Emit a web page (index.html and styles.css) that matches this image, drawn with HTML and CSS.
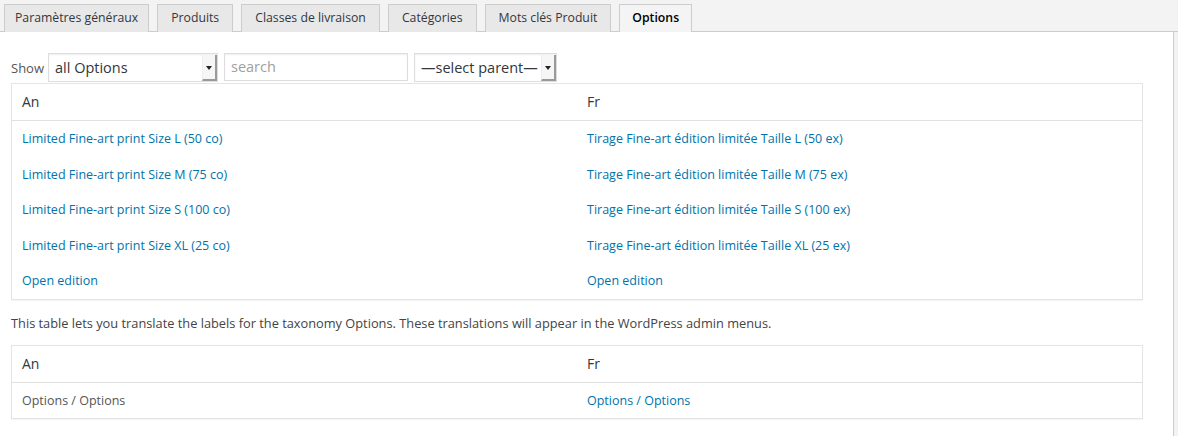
FILE: index.html
```html
<!DOCTYPE html>
<html>
<head>
<meta charset="utf-8">
<link rel="stylesheet" href="styles.css">
</head>
<body>
<nav class="tabs">
  <a class="tab tab-first">Paramètres généraux</a>
  <a class="tab">Produits</a>
  <a class="tab">Classes de livraison</a>
  <a class="tab">Catégories</a>
  <a class="tab">Mots clés Produit</a>
  <a class="tab tab-active">Options</a>
</nav>
<div class="panel">
  <div class="filters">
    <span class="show-label">Show</span>
    <div class="fake-select sel-all"><span class="sel-text">all Options</span><span class="sel-arrow"></span></div>
    <div class="search-box">search</div>
    <div class="fake-select sel-parent"><span class="sel-text">—select parent—</span><span class="sel-arrow"></span></div>
  </div>
  <table class="grid">
    <thead>
      <tr><th>An</th><th>Fr</th></tr>
    </thead>
    <tbody>
      <tr><td><a>Limited Fine-art print Size L (50 co)</a></td><td><a>Tirage Fine-art édition limitée Taille L (50 ex)</a></td></tr>
      <tr><td><a>Limited Fine-art print Size M (75 co)</a></td><td><a>Tirage Fine-art édition limitée Taille M (75 ex)</a></td></tr>
      <tr><td><a>Limited Fine-art print Size S (100 co)</a></td><td><a>Tirage Fine-art édition limitée Taille S (100 ex)</a></td></tr>
      <tr><td><a>Limited Fine-art print Size XL (25 co)</a></td><td><a>Tirage Fine-art édition limitée Taille XL (25 ex)</a></td></tr>
      <tr><td><a>Open edition</a></td><td><a>Open edition</a></td></tr>
    </tbody>
  </table>
  <p class="note">This table lets you translate the labels for the taxonomy Options. These translations will appear in the WordPress admin menus.</p>
  <table class="grid grid-labels">
    <thead>
      <tr><th>An</th><th>Fr</th></tr>
    </thead>
    <tbody>
      <tr><td class="plain">Options / Options</td><td><a>Options / Options</a></td></tr>
    </tbody>
  </table>
</div>
</body>
</html>
```

FILE: styles.css
```css
html, body {
  margin: 0;
  padding: 0;
  background: #f3f3f3;
  font-family: "Open Sans", "Liberation Sans", sans-serif;
  font-size: 13px;
  color: #444;
}

.tabs {
  display: flex;
  gap: 8px;
  padding: 4px 0 0 4px;
  border-bottom: 1px solid #ccc;
  height: 27px;
}

.tab {
  display: block;
  box-sizing: border-box;
  height: 28px;
  padding: 0 13px;
  line-height: 26px;
  background: #e8e8e8;
  border: 1px solid #ccc;
  border-bottom: none;
  color: #32373c;
  font-size: 12.25px;
  white-space: nowrap;
}

.tab-first {
  padding: 0 10px;
}

.tab-active {
  background: #f4f4f4;
  font-weight: 600;
  color: #000;
  padding: 0 12px;
}

.panel {
  background: #fff;
  width: 1174px;
  box-sizing: border-box;
  border-right: 1px solid #ccc;
  padding: 21px 30px 30px 11px;
  min-height: 404px;
}

.filters {
  display: flex;
  align-items: flex-start;
  height: 30px;
}

.show-label {
  flex: none;
  width: 37px;
  color: #555;
  font-size: 13px;
  line-height: 28px;
  margin-top: 1px;
}

.fake-select {
  display: flex;
  align-items: stretch;
  box-sizing: border-box;
  height: 29px;
  border: 1px solid #ddd;
  box-shadow: inset 0 1px 2px rgba(0,0,0,.07);
  background: #fff;
  color: #32373c;
  font-size: 14.5px;
  flex: none;
}

.sel-all {
  width: 170px;
}

.sel-text {
  flex: 1;
  padding-left: 6px;
  line-height: 27px;
  white-space: nowrap;
}

.sel-arrow {
  position: relative;
  width: 12px;
  margin-top: 1px;
  background: #f6f6f6;
  border-right: 2px solid #9a9a9a;
  border-bottom: 2px solid #9a9a9a;
  border-left: 1px solid #eee;
}

.sel-arrow::after {
  content: "";
  position: absolute;
  left: 3px;
  top: 11px;
  border-left: 3px solid transparent;
  border-right: 3px solid transparent;
  border-top: 4px solid #222;
}

.search-box {
  flex: none;
  box-sizing: border-box;
  width: 184px;
  height: 28px;
  margin-left: 6px;
  border: 1px solid #ddd;
  box-shadow: inset 0 1px 2px rgba(0,0,0,.07);
  padding-left: 6px;
  line-height: 26px;
  color: #a0a0a0;
  font-size: 14.5px;
}

.sel-parent {
  width: 143px;
  margin-left: 6px;
}

.grid {
  width: 1132px;
  border-collapse: collapse;
  border: 1px solid #e5e5e5;
  box-shadow: 0 1px 1px rgba(0,0,0,.04);
  table-layout: fixed;
}

.grid th {
  text-align: left;
  font-weight: 400;
  font-size: 14px;
  color: #32373c;
  padding: 8px 10px;
  line-height: 20px;
  height: 20px;
  border-bottom: 1px solid #e1e1e1;
}

.grid td {
  padding: 8px 10px;
  line-height: 19.6px;
  vertical-align: middle;
  font-size: 12.5px;
}

.grid a {
  color: #0073aa;
  text-decoration: none;
}

.grid td.plain {
  color: #555;
}

.note {
  margin: 13px 0 12px;
  line-height: 20px;
  color: #444;
  font-size: 12.8px;
}

.grid-labels td {
  padding: 8px 10px;
  line-height: 19px;
}
```
